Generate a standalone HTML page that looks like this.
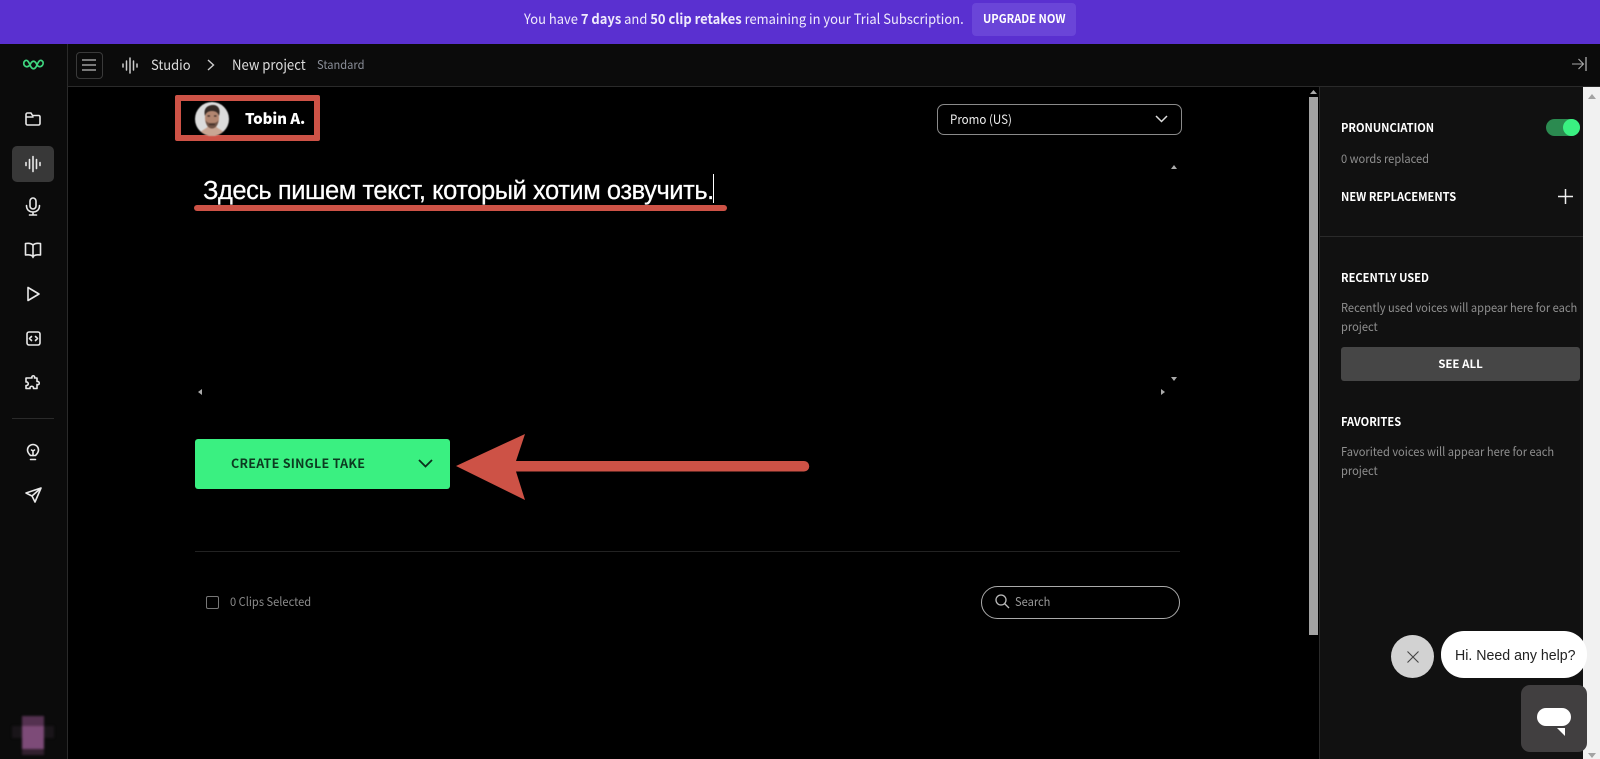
<!DOCTYPE html>
<html><head><meta charset="utf-8">
<style>
html,body{margin:0;padding:0;width:1600px;height:759px;overflow:hidden;background:#000}
body{position:relative;font-family:"Noto Sans CJK JP","Liberation Sans",sans-serif;color:#fff}
.a{position:absolute}
.t{position:absolute;white-space:nowrap;line-height:20px}
.n{transform:scaleX(.925);transform-origin:0 50%}
.h{font-size:12px;font-weight:700;color:#fff}
.g{font-size:12px;color:#8f8f8f}
svg{position:absolute;overflow:visible}
.i{fill:none;stroke:#e8e8e8;stroke-width:1.6;stroke-linecap:round;stroke-linejoin:round}
</style></head><body>
<div class="a" style="left:0;top:0;width:1600px;height:44px;background:#5a30d0"></div>
<div class="t n" style="left:524px;top:9px;font-size:14px;color:#efeafc">You have <b>7 days</b> and <b>50 clip retakes</b> remaining in your Trial Subscription.</div>
<div class="a" style="left:972px;top:3px;width:104px;height:33px;background:#6a45d8;border-radius:4px"></div>
<div class="t n" style="left:983px;top:9px;font-size:12px;font-weight:700">UPGRADE NOW</div>

<div class="a" style="left:0;top:44px;width:67px;height:715px;background:#0b0b0b;border-right:1px solid #2a2a2a"></div>
<div class="a" style="left:68px;top:44px;width:1532px;height:42px;background:#0b0b0b;border-bottom:1px solid #2a2a2a"></div>

<svg style="left:23px;top:59px" width="21" height="12" viewBox="0 0 21 12"><path d="M1 3C3 0 5 1 7 6C9 11 12 11 14 6C16 1 18 0 20 3C21 6 17 10 14 6C12 1 9 1 7 6C3 10 0 6 1 3Z" fill="none" stroke="#3fd67f" stroke-width="1.700"/></svg>
<svg style="left:24px;top:110px" width="18" height="18" viewBox="0 0 18 18"><path class="i" d="M2 13V4.500A1.500 1.500 0 0 1 3.500 3H7l1.500 2.500H15A1.500 1.500 0 0 1 16 7v6.500A1.500 1.500 0 0 1 14.500 15H3.500A1.500 1.500 0 0 1 2 13.500ZM2 7H9"/></svg>
<div class="a" style="left:12px;top:146px;width:42px;height:36px;background:#383838;border-radius:5px"></div>
<svg style="left:25px;top:155px" width="16" height="18" viewBox="0 0 16 18"><path class="i" d="M1 7.500v3M4.500 4.500v9M8 1.500v15M11.500 4.500v9M15 7.500v3"/></svg>
<svg style="left:24px;top:197px" width="18" height="19" viewBox="0 0 18 19"><rect class="i" x="6" y="1" width="6" height="11" rx="3"/><path class="i" d="M2.500 8.500C2.500 13 5.500 15 9 15S15.500 13 15.500 8.500M9 15v3M5.500 18h7"/></svg>
<svg style="left:24px;top:241px" width="18" height="18" viewBox="0 0 18 18"><path class="i" d="M9 4C7.500 2.500 4.500 2 1.500 2.500V14C4.500 13.500 7.500 14 9 15.500C10.500 14 13.500 13.500 16.500 14V2.500C13.500 2 10.500 2.500 9 4ZM9 4V16.500"/></svg>
<svg style="left:26px;top:286px" width="14" height="16" viewBox="0 0 14 16"><path class="i" d="M2 1.500V14.500L13 8Z" stroke-width="1.800"/></svg>
<svg style="left:26px;top:331px" width="15" height="15" viewBox="0 0 15 15"><rect class="i" x="1" y="1" width="13" height="13" rx="2"/><path class="i" d="M5.500 5.500L3.500 7.500L5.500 9.500M9.500 5.500L11.500 7.500L9.500 9.500"/></svg>
<svg style="left:24px;top:373px" width="18" height="18" viewBox="0 0 18 18"><path class="i" d="M6.500 4H9C8 1 12.500 1 11.500 4H14V7.500C17 7 17 11.500 14 10.500V14.500H10.500C11 11.500 6.500 11.500 7 14.500H3V11.500C6 12 6 7.500 3 8V4Z" transform="translate(-1 1)"/></svg>
<div class="a" style="left:12px;top:418px;width:42px;height:1px;background:#2a2a2a"></div>
<svg style="left:26px;top:443px" width="14" height="18" viewBox="0 0 14 18"><path class="i" d="M4.500 12.500C3 11 1.500 9.500 1.500 7A5.500 5.500 0 0 1 12.500 7C12.500 9.500 11 11 9.500 12.500ZM4.500 16.500h5"/><path class="i" d="M7 12.500V8M5.500 7L7 8L8.500 7" stroke-width="1.100"/></svg>
<svg style="left:25px;top:487px" width="17" height="16" viewBox="0 0 17 16"><path class="i" d="M16 1L1 6L7 9L10 15ZM7 9L16 1"/></svg>

<div style="filter:blur(1px)">
<div class="a" style="left:12px;top:726px;width:42px;height:12px;background:#191519"></div>
<div class="a" style="left:22px;top:716px;width:22px;height:10px;background:#543150"></div>
<div class="a" style="left:22px;top:726px;width:22px;height:23px;background:#7d4b78"></div>
<div class="a" style="left:22px;top:749px;width:22px;height:6px;background:#33202f"></div>
</div>

<div class="a" style="left:76px;top:52px;width:25px;height:25px;border:1px solid #3a3a3a;border-radius:4px"></div>
<svg style="left:82px;top:59px" width="14" height="12" viewBox="0 0 14 12"><path d="M0 1H14M0 6H14M0 11H14" stroke="#bbb" stroke-width="1.200"/></svg>
<svg style="left:122px;top:57px" width="16" height="17" viewBox="0 0 16 17"><path d="M1 7v3M4.500 4v9M8 1v15M11.500 4v9M15 7v3" fill="none" stroke="#ccc" stroke-width="1.500" stroke-linecap="round"/></svg>
<div class="t n" style="left:151px;top:55px;font-size:14px;color:#ddd">Studio</div>
<svg style="left:207px;top:59px" width="8" height="12" viewBox="0 0 8 12"><path d="M1 1L6.500 6L1 11" fill="none" stroke="#ccc" stroke-width="1.400"/></svg>
<div class="t n" style="left:232px;top:55px;font-size:14.200px;color:#ddd">New project</div>
<div class="t n" style="left:317px;top:55px;font-size:12px;color:#8b8f99">Standard</div>
<svg style="left:1572px;top:57px" width="15" height="14" viewBox="0 0 15 14"><path d="M0 7H11M6.500 2L11.500 7L6.500 12" fill="none" stroke="#aaa" stroke-width="1.100"/><path d="M14 0V14" stroke="#ddd" stroke-width="1"/></svg>

<div class="a" style="left:175px;top:95px;width:133px;height:34px;border:6px solid #cd5246;border-radius:2px"></div>
<svg style="left:195px;top:102px;filter:blur(.5px)" width="34" height="34" viewBox="0 0 34 34"><defs><clipPath id="c"><circle cx="17" cy="17" r="17"/></clipPath></defs><g clip-path="url(#c)"><rect width="34" height="34" fill="#dcdcdc"/><path d="M3 34C5 28 12 27 13 24H21C22 27 29 28 31 34Z" fill="#c9a693"/><ellipse cx="17" cy="16" rx="7" ry="10" fill="#b28670"/><path d="M10 14C8 6 13 3 18 3C23 3 26 7 24 14C23 10 20 9 17 9C14 9 11 10 10 14Z" fill="#352a25"/><path d="M10.500 18C11 24 14 26.500 17 26.500C20 26.500 23 24 23.500 18C22 21 20 21 17 21C14 21 12 21 10.500 18Z" fill="#6e5245"/><path d="M14 22.500H20" stroke="#3f2d26" stroke-width="1.200"/><path d="M12.500 14H15M19 14H21.500" stroke="#3a2a24" stroke-width="1.200"/></g></svg>
<div class="t" style="left:245px;top:109px;font-size:15px;font-weight:900;letter-spacing:-.1px">Tobin A.</div>

<div class="a" style="left:937px;top:104px;width:243px;height:29px;border:1px solid #8a8a8a;border-radius:7px"></div>
<div class="t n" style="left:950px;top:109px;font-size:12.500px;color:#eee">Promo (US)</div>
<svg style="left:1155px;top:115px" width="13" height="8" viewBox="0 0 13 8"><path d="M1 1L6.500 6.500L12 1" fill="none" stroke="#ddd" stroke-width="1.500"/></svg>

<div class="t" style="left:203px;top:173px;font-family:'Liberation Sans',sans-serif;font-size:25.500px;line-height:36px;color:#fff;letter-spacing:-.45px;-webkit-text-stroke:.25px #fff">Здесь пишем текст, который хотим озвучить.</div>
<div class="a" style="left:713px;top:174px;width:1px;height:29px;background:#fff"></div>
<div class="a" style="left:194px;top:205px;width:533px;height:6px;border-radius:3px;background:#cd5246"></div>

<svg style="left:1171px;top:165px" width="6" height="4"><path d="M0 4L3 0L6 4Z" fill="#aaa"/></svg>
<svg style="left:1171px;top:377px" width="6" height="4"><path d="M0 0L3 4L6 0Z" fill="#aaa"/></svg>
<svg style="left:198px;top:389px" width="4" height="6"><path d="M4 0L0 3L4 6Z" fill="#aaa"/></svg>
<svg style="left:1161px;top:389px" width="4" height="6"><path d="M0 0L4 3L0 6Z" fill="#aaa"/></svg>

<div class="a" style="left:195px;top:439px;width:255px;height:50px;background:#3af081;border-radius:3px"></div>
<div class="t" style="left:231px;top:453px;font-size:12.500px;font-weight:700;color:#0c3a20;letter-spacing:.27px">CREATE SINGLE TAKE</div>
<svg style="left:418px;top:459px" width="15" height="9" viewBox="0 0 15 9"><path d="M1 1L7.500 7.500L14 1" fill="none" stroke="#0a2f1a" stroke-width="1.800"/></svg>

<svg style="left:450px;top:430px" width="365" height="75" viewBox="0 0 365 75"><path d="M6 36L75 4L66 31H354A5 5 0 0 1 354 41.500H66L75 70Z" fill="#cd5246"/></svg>

<div class="a" style="left:195px;top:551px;width:985px;height:1px;background:#222"></div>
<div class="a" style="left:206px;top:596px;width:11px;height:11px;border:1.500px solid #777;border-radius:2px"></div>
<div class="t n" style="left:230px;top:592px;font-size:12px;color:#8a8a8a">0 Clips Selected</div>
<div class="a" style="left:981px;top:586px;width:197px;height:31px;border:1px solid #aaa;border-radius:17px"></div>
<svg style="left:995px;top:594px" width="15" height="15" viewBox="0 0 15 15"><circle cx="6" cy="6" r="5" fill="none" stroke="#bbb" stroke-width="1.300"/><path d="M9.500 9.500L14 14" stroke="#bbb" stroke-width="1.300"/></svg>
<div class="t n" style="left:1015px;top:592px;font-size:12px;color:#999">Search</div>

<div class="a" style="left:1309px;top:87px;width:10px;height:672px;background:#000"></div>
<svg style="left:1310px;top:90px" width="7" height="4"><path d="M0 4L3.500 0L7 4Z" fill="#aaa"/></svg>
<div class="a" style="left:1309px;top:97px;width:9px;height:538px;background:#a3a3a3"></div>

<div class="a" style="left:1319px;top:87px;width:264px;height:672px;background:#111;border-left:1px solid #2a2a2a;box-sizing:border-box"></div>
<div class="a" style="left:1583px;top:87px;width:17px;height:672px;background:#f1f1f1"></div>
<svg style="left:1588px;top:94px" width="8" height="5"><path d="M0 5L4 0L8 5Z" fill="#a3a3a3"/></svg>
<svg style="left:1588px;top:753px" width="8" height="5"><path d="M0 0L4 5L8 0Z" fill="#a3a3a3"/></svg>

<div class="t h n" style="left:1341px;top:118px">PRONUNCIATION</div>
<div class="a" style="left:1546px;top:119px;width:34px;height:17px;border-radius:9px;background:#2b8a50"></div>
<div class="a" style="left:1563px;top:119px;width:17px;height:17px;border-radius:50%;background:#3af081"></div>
<div class="t g n" style="left:1341px;top:149px">0 words replaced</div>
<div class="t h n" style="left:1341px;top:187px">NEW REPLACEMENTS</div>
<svg style="left:1558px;top:189px" width="15" height="15" viewBox="0 0 15 15"><path d="M7.500 0V15M0 7.500H15" stroke="#eee" stroke-width="1.500"/></svg>
<div class="a" style="left:1320px;top:236px;width:263px;height:1px;background:#2a2a2a"></div>
<div class="t h n" style="left:1341px;top:268px">RECENTLY USED</div>
<div class="t g n" style="left:1341px;top:298px">Recently used voices will appear here for each</div>
<div class="t g n" style="left:1341px;top:317px">project</div>
<div class="a" style="left:1341px;top:347px;width:239px;height:34px;background:#464646;border-radius:3px"></div>
<div class="t h" style="left:1341px;top:354px;width:239px;text-align:center;font-size:11.500px">SEE ALL</div>
<div class="t h n" style="left:1341px;top:412px">FAVORITES</div>
<div class="t g n" style="left:1341px;top:442px">Favorited voices will appear here for each</div>
<div class="t g n" style="left:1341px;top:461px">project</div>

<div class="a" style="left:1391px;top:635px;width:43px;height:43px;border-radius:50%;background:#d2d2d2"></div>
<svg style="left:1407px;top:651px" width="12" height="12" viewBox="0 0 12 12"><path d="M0.500 0.500L11.500 11.500M11.500 0.500L0.500 11.500" stroke="#444" stroke-width="1.100"/></svg>
<div class="a" style="left:1441px;top:631px;width:146px;height:47px;border-radius:23px;background:#fff"></div>
<div class="t" style="left:1455px;top:646px;font-family:'Liberation Sans',sans-serif;font-size:15px;color:#222;transform:scaleX(.945);transform-origin:0 50%">Hi. Need any help?</div>
<div class="a" style="left:1521px;top:685px;width:66px;height:67px;border-radius:9px;background:#413f40"></div>
<div class="a" style="left:1537px;top:708px;width:34px;height:18px;border-radius:9px;background:#fff"></div>
<svg style="left:1557px;top:728px" width="8" height="8"><path d="M0 0H8V8Z" fill="#fff"/></svg>
</body></html>
